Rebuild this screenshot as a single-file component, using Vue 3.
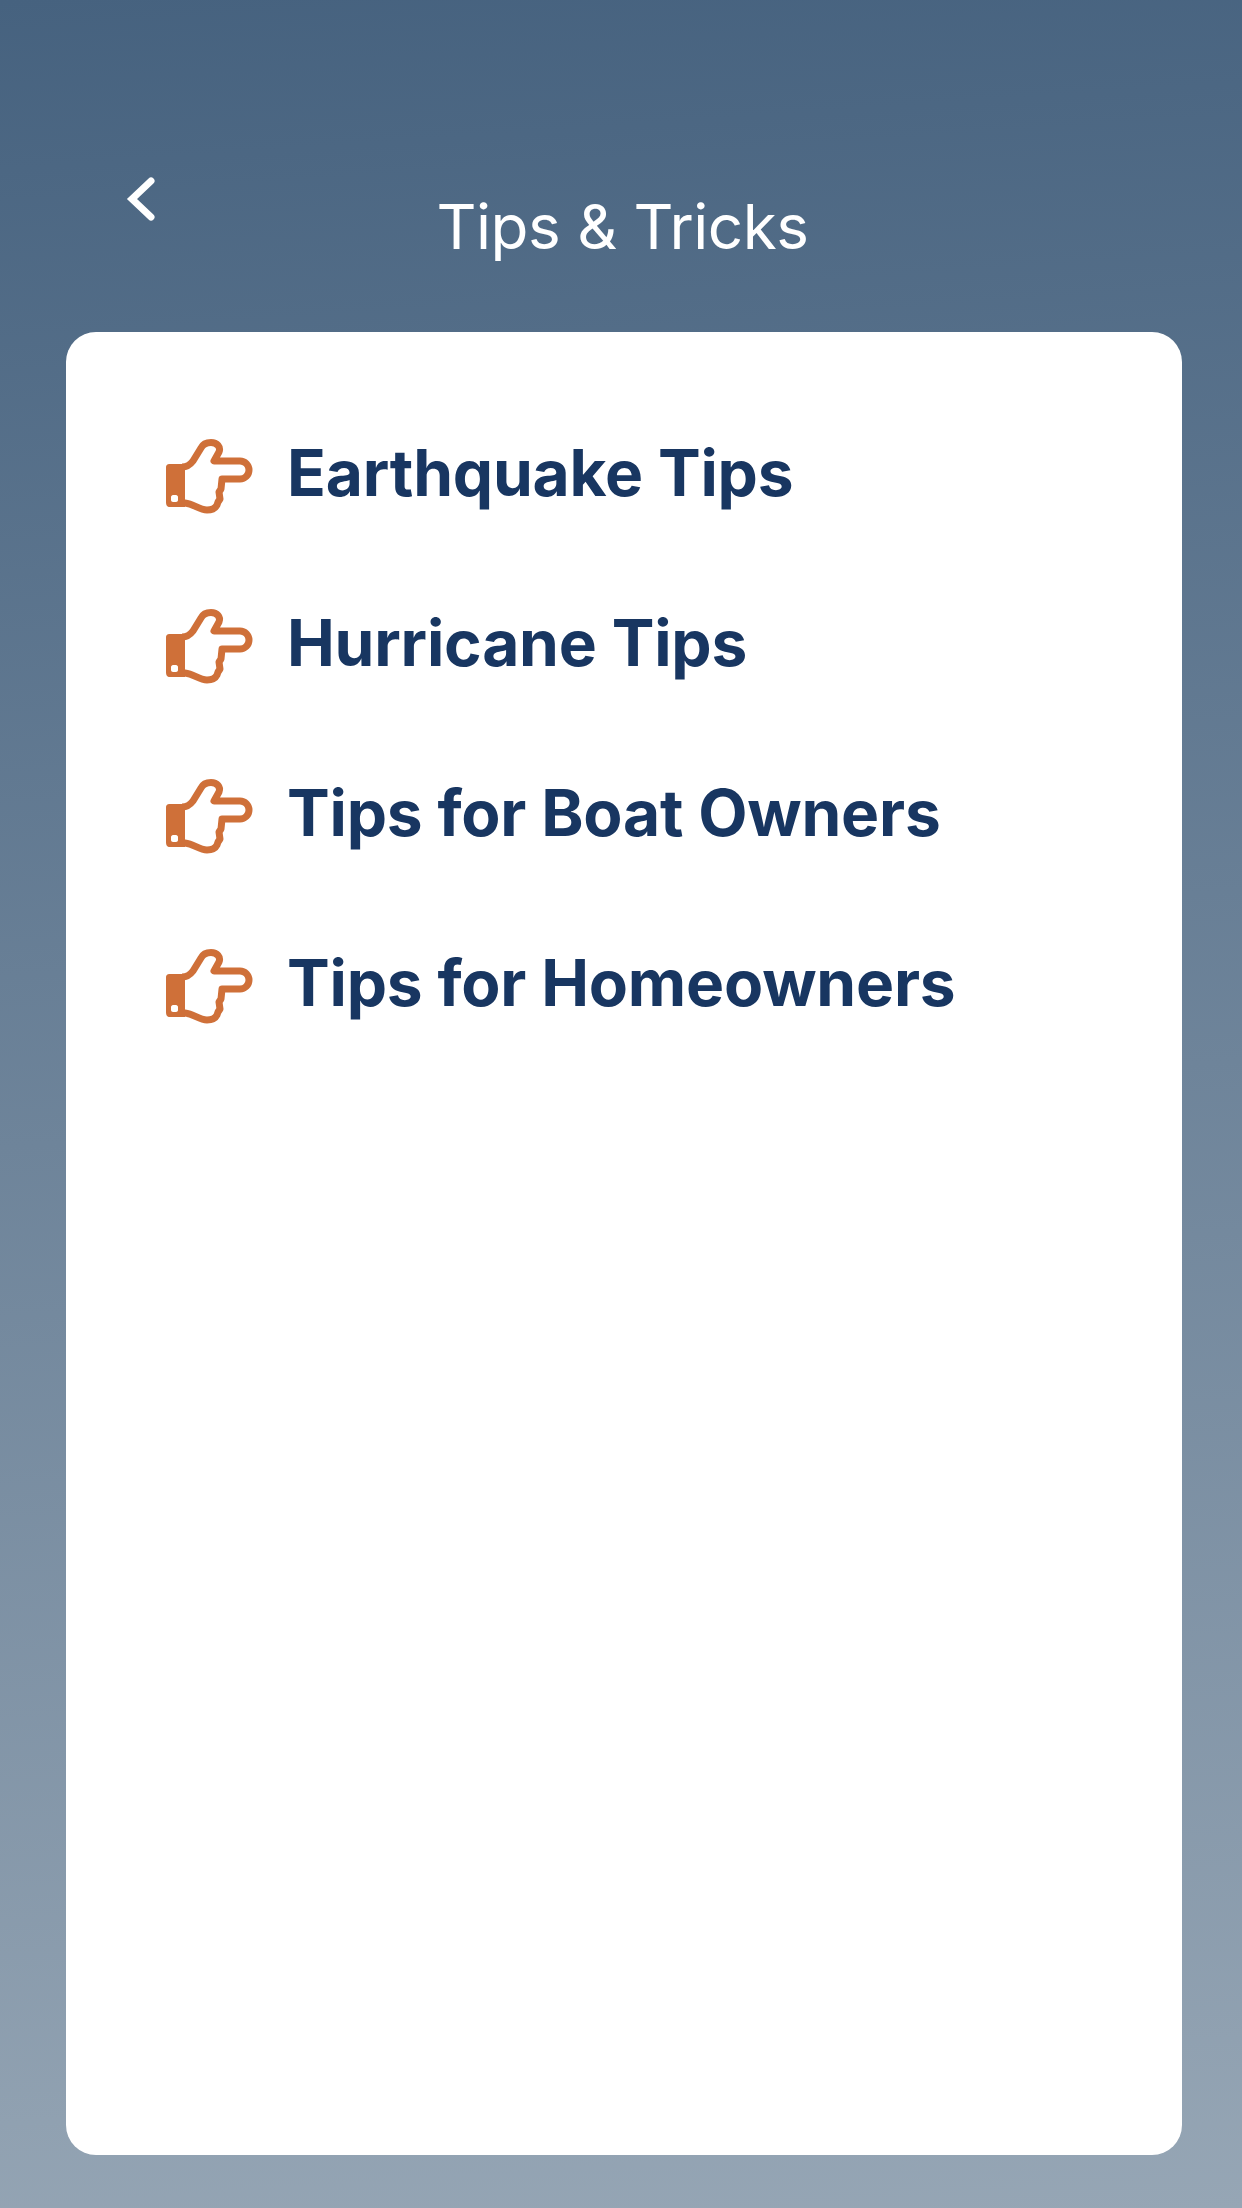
<script setup>
const tips = ['Earthquake Tips', 'Hurricane Tips', 'Tips for Boat Owners', 'Tips for Homeowners'];
</script>

<template>
  <div class="screen">
    <header class="header">
      <button class="back" aria-label="Back">
        <svg width="30" height="44" viewBox="0 0 30 44">
          <path d="M25 4 L6 22 L25 40" fill="none" stroke="#fff" stroke-width="7" stroke-linecap="round" stroke-linejoin="miter" />
        </svg>
      </button>
      <h1>Tips &amp; Tricks</h1>
    </header>

    <main class="card">
      <div v-for="tip in tips" :key="tip" class="tip">
        <svg class="hand" width="88" height="76" viewBox="0 0 88 76">
          <path
            d="M16 28 C21 28 24 26 27 22 L35 9 C37 5 41 3.5 45 3.5 C51 3.5 55 8 53 13 L48 22 H74 A9 9 0 0 1 74 40 H56 L55 50 L53 53 L54 60 L52 63 L51 66 C49 70 45 71 41 71 C33 71 28 65 19 64 H16"
            fill="none" stroke="#cf7039" stroke-width="7" stroke-linejoin="round"
          />
          <path fill-rule="evenodd" d="M4 25 H19 V68 H4 C1 68 0 66 0 63 V29 C0 26 1 25 4 25 Z M7 56 C6 56 5 57 5 58 V61 C5 62 6 63 7 63 H10 C11 63 12 62 12 61 V58 C12 57 11 56 10 56 Z" fill="#cf7039" />
        </svg>
        <span>{{ tip }}</span>
      </div>
    </main>
  </div>
</template>

<style scoped>
.screen {
  width: 1242px;
  height: 2208px;
  box-sizing: border-box;
  padding: 0 60px 53px 66px;
  display: flex;
  flex-direction: column;
  background: linear-gradient(176deg, #46627f 0%, #96a6b5 100%);
  font-family: Inter, 'Noto Sans', sans-serif;
  overflow: hidden;
}

.header {
  height: 332px;
  flex: none;
  position: relative;
  display: flex;
  justify-content: center;
}

.header h1 {
  margin: 190px 3px 0 0;
  height: 74px;
  line-height: 74px;
  font-size: 62px;
  font-weight: 400;
  color: #fff;
  letter-spacing: -0.5px;
}

.back {
  position: absolute;
  left: 60px;
  top: 177px;
  padding: 0;
  border: none;
  background: none;
  line-height: 0;
}

.card {
  flex: 1;
  background: #fff;
  border-radius: 30px;
  padding: 90px 0 0 100px;
  display: flex;
  flex-direction: column;
  gap: 70px;
}

.tip {
  height: 100px;
  display: flex;
  align-items: center;
  gap: 33px;
  color: #183661;
  font-size: 64px;
  font-weight: 650;
  letter-spacing: -0.2px;
}

.hand {
  flex: none;
  margin-top: 10px;
}
</style>
